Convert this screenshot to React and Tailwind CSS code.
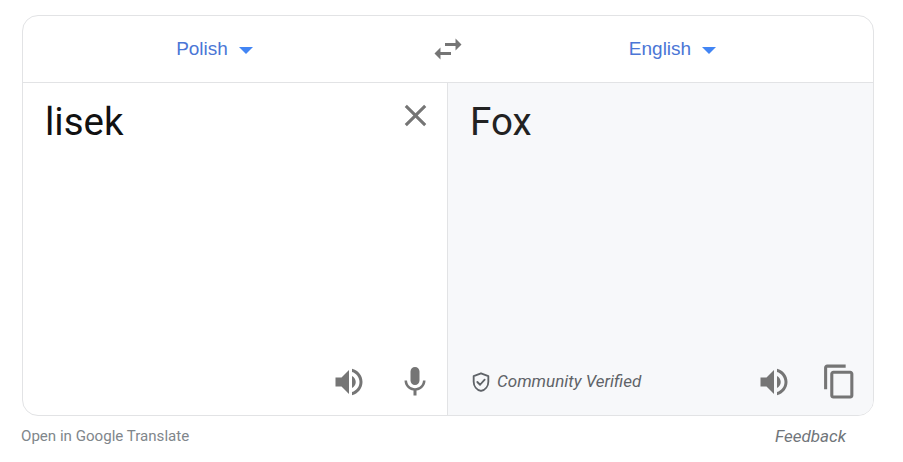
import React from "react";

const SpeakerIcon = () => (
  <svg width="36" height="36" viewBox="0 0 24 24" fill="#757575">
    <path d="M3 9v6h4l5 5V4L7 9H3zm13.5 3c0-1.77-1.02-3.29-2.5-4.03v8.05c1.48-.73 2.5-2.25 2.5-4.02zM14 3.23v2.06c2.89.86 5 3.54 5 6.71s-2.11 5.85-5 6.71v2.06c4.01-.91 7-4.49 7-8.77s-2.99-7.86-7-8.77z" />
  </svg>
);

const Caret = () => <span className="ml-[11px] mt-[3px] w-0 h-0 border-x-[7px] border-x-transparent border-t-[7px] border-t-[#4285f4]" />;

const LangButton = ({ label, className }) => (
  <div className={`flex items-center justify-center text-[#4b76d6] text-[19px] font-['Liberation_Sans',sans-serif] ${className}`}>
    {label}
    <Caret />
  </div>
);

export default function App() {
  return (
    <div className="w-[903px] h-[462px] bg-white pt-[15px] pl-[22px] font-['Roboto',sans-serif] overflow-hidden">
      <div className="w-[852px] h-[401px] border border-[#e2e3e5] rounded-[16px] flex flex-col overflow-hidden">
        <div className="h-[67px] flex items-center border-b border-[#e2e3e5] shrink-0">
          <LangButton label="Polish" className="w-[383px]" />
          <svg width="36" height="36" viewBox="0 0 24 24" fill="#757575" className="ml-[24px] mt-[-1px]">
            <path d="M6.99 11L3 15l3.99 4v-3H14v-2H6.99v-3zM21 9l-3.99-4v3H10v2h7.01v3L21 9z" />
          </svg>
          <LangButton label="English" className="flex-1 pl-[6px]" />
        </div>
        <div className="flex-1 flex min-h-0">
          <div className="w-[425px] border-r border-[#e2e3e5] flex flex-col justify-between">
            <div className="flex justify-between pl-[22px] pr-[13px] pt-[14px]">
              <span className="text-[38.5px] leading-[50px] text-[#111]">lisek</span>
              <svg width="37" height="37" viewBox="0 0 24 24" fill="#757575">
                <path d="M19 6.41 17.59 5 12 10.59 6.41 5 5 6.41 10.59 12 5 17.59 6.41 19 12 13.41 17.59 19 19 17.59 13.41 12z" />
              </svg>
            </div>
            <div className="flex justify-end items-center gap-[30px] pr-[14px] pb-[15px]">
              <SpeakerIcon />
              <svg width="36" height="36" viewBox="0 0 24 24" fill="#757575">
                <path d="M12 14c1.66 0 3-1.34 3-3V5c0-1.66-1.34-3-3-3S9 3.34 9 5v6c0 1.66 1.34 3 3 3zm5.3-3c0 3-2.54 5.1-5.3 5.1S6.7 14 6.7 11H5c0 3.41 2.72 6.23 6 6.72V21h2v-3.28c3.28-.48 6-3.3 6-6.72h-1.7z" />
              </svg>
            </div>
          </div>
          <div className="flex-1 bg-[#f7f8fa] flex flex-col justify-between">
            <div className="pl-[22px] pt-[14px] text-[38.5px] leading-[50px] text-[#222]">Fox</div>
            <div className="flex items-center pl-[22px] pr-[15px] pb-[15px]">
              <svg width="22" height="22" viewBox="0 0 24 24" fill="none" stroke="#5f6368" strokeWidth="2" strokeLinejoin="round" strokeLinecap="round">
                <path d="M12 2.5 4 5.6v6c0 4.9 3.4 9 8 10.2 4.6-1.2 8-5.3 8-10.2v-6z" />
                <path d="m8 12 3 3 5-5.5" />
              </svg>
              <span className="ml-[5px] mt-[1px] italic text-[17px] text-[#5f6368]">Community Verified</span>
              <div className="ml-auto flex items-center gap-[29px]">
                <SpeakerIcon />
                <svg width="37" height="37" viewBox="0 0 24 24" fill="#757575">
                  <path d="M16 1H4c-1.1 0-2 .9-2 2v14h2V3h12V1zm3 4H8c-1.1 0-2 .9-2 2v14c0 1.1.9 2 2 2h11c1.1 0 2-.9 2-2V7c0-1.1-.9-2-2-2zm0 16H8V7h11v14z" />
                </svg>
              </div>
            </div>
          </div>
        </div>
      </div>
      <div className="flex justify-between w-[824px] mt-[10px]">
        <span className="ml-[-1px] text-[15.1px] leading-[20px] text-[#80868b]">Open in Google Translate</span>
        <span className="italic text-[17px] leading-[20px] text-[#70757a]">Feedback</span>
      </div>
    </div>
  );
}
